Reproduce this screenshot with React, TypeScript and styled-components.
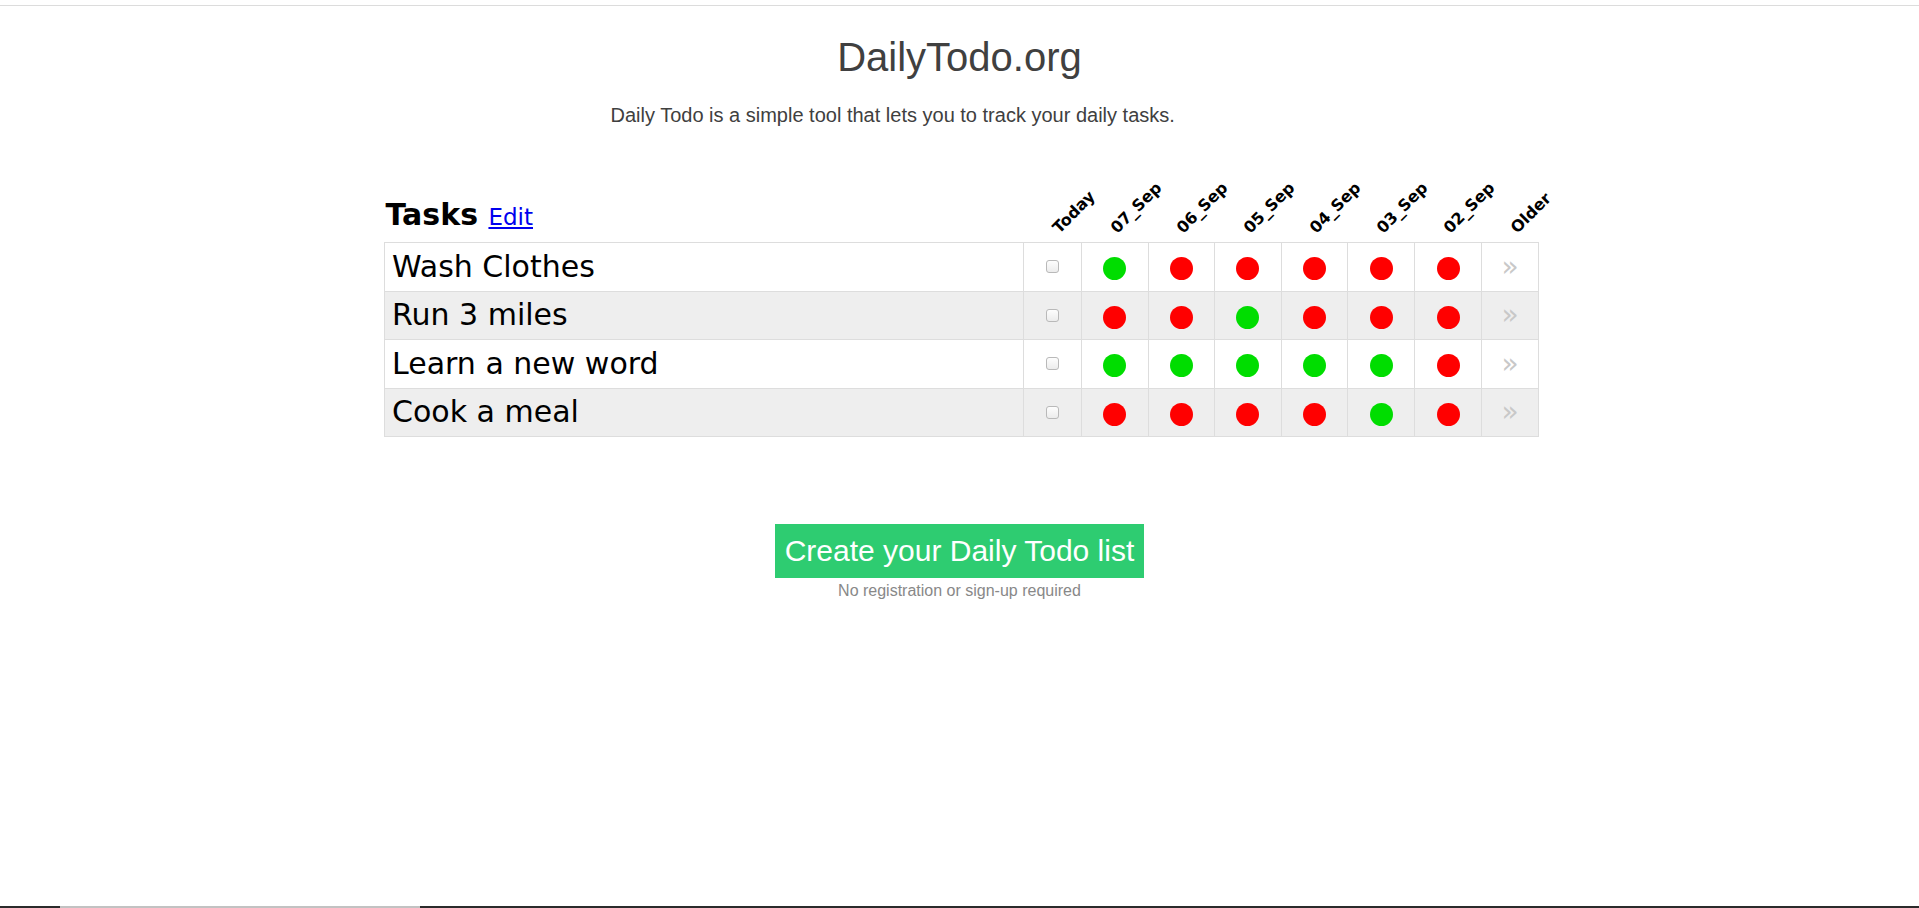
import styled, { createGlobalStyle } from 'styled-components';

const GlobalStyle = createGlobalStyle`
  html, body {
    margin: 0;
    padding: 0;
    background: #fff;
  }
  body {
    font-family: 'Liberation Sans', Arial, sans-serif;
    color: #404040;
  }
`;

const columns = ['Today', '07_Sep', '06_Sep', '05_Sep', '04_Sep', '03_Sep', '02_Sep', 'Older'];
const widths = [58, 66.5, 66.5, 66.5, 66.5, 67, 67, 57];

// g = done, r = missed, newest day first
const tasks: [string, string][] = [
  ['Wash Clothes', 'grrrrr'],
  ['Run 3 miles', 'rrgrrr'],
  ['Learn a new word', 'gggggr'],
  ['Cook a meal', 'rrrrgr'],
];

function App() {
  return (
    <>
      <GlobalStyle />
      <Page>
        <TopBar />
        <Main>
          <Title>DailyTodo.org</Title>
          <Intro>Daily Todo is a simple tool that lets you to track your daily tasks.</Intro>
          <Table>
            <thead>
              <tr>
                <TasksHead>
                  Tasks <EditLink href="#">Edit</EditLink>
                </TasksHead>
                {columns.map((c, i) => (
                  <DayHead key={c} $w={widths[i]}>
                    <Slant>{c}</Slant>
                  </DayHead>
                ))}
              </tr>
            </thead>
            <tbody>
              {tasks.map(([name, marks], r) => (
                <Row key={name} $alt={r % 2 === 1}>
                  <TaskCell>{name}</TaskCell>
                  <MarkCell>
                    <Check type="checkbox" />
                  </MarkCell>
                  {marks.split('').map((m, i) => (
                    <MarkCell key={i}>
                      <Dot $done={m === 'g'} />
                    </MarkCell>
                  ))}
                  <MarkCell>
                    <More>»</More>
                  </MarkCell>
                </Row>
              ))}
            </tbody>
          </Table>
          <Cta>
            <CreateButton>Create your Daily Todo list</CreateButton>
            <Note>No registration or sign-up required</Note>
          </Cta>
        </Main>
        <BottomStrip>
          <StripThumb />
        </BottomStrip>
      </Page>
    </>
  );
}

const Page = styled.div`
  min-height: 100vh;
  display: flex;
  flex-direction: column;
`;

const TopBar = styled.div`
  height: 5px;
  border-bottom: 1px solid #dcdcdc;
`;

const Main = styled.main`
  flex: 1;
`;

const Title = styled.h1`
  margin: 28px 0 0;
  font-size: 40px;
  font-weight: normal;
  line-height: 46px;
  text-align: center;
  color: #404040;
`;

const Intro = styled.p`
  width: 1154px;
  box-sizing: border-box;
  margin: 24px auto 0;
  padding-left: 228px;
  font-size: 20px;
  line-height: 23px;
  color: #404040;
`;

const Table = styled.table`
  width: 1155px;
  margin: 72px 0 0 calc(50% - 575.5px);
  border-collapse: collapse;
  table-layout: fixed;
  font-family: 'DejaVu Sans', Verdana, sans-serif;
  color: #000;
`;

const TasksHead = styled.th`
  padding: 0 0 9px 1px;
  text-align: left;
  vertical-align: bottom;
  font-size: 30px;
  font-weight: bold;
  line-height: 32px;
  white-space: nowrap;
`;

const EditLink = styled.a`
  font-size: 23px;
  font-weight: normal;
  color: #0000ee;
  text-decoration: underline;
`;

const DayHead = styled.th<{ $w: number }>`
  width: ${(p) => p.$w}px;
  padding: 0 0 5px;
  vertical-align: bottom;
`;

const Slant = styled.div`
  width: 0;
  margin-left: 38px;
  font-size: 16px;
  font-weight: bold;
  line-height: 18px;
  white-space: nowrap;
  text-align: left;
  transform: rotate(-45deg);
  transform-origin: 0 100%;
`;

const Row = styled.tr<{ $alt: boolean }>`
  height: 48.5px;
  background: ${(p) => (p.$alt ? '#eeeeee' : '#ffffff')};
`;

const TaskCell = styled.td`
  border: 1px solid #dddddd;
  padding: 0 7px;
  font-size: 30px;
  line-height: 34px;
  white-space: nowrap;
`;

const MarkCell = styled.td`
  border: 1px solid #dddddd;
  padding: 0;
  text-align: center;
  vertical-align: middle;
  font-size: 0;
`;

const Check = styled.input`
  appearance: none;
  width: 13px;
  height: 13px;
  margin: 0;
  border: 1px solid #b9b9b9;
  border-radius: 3px;
  background: linear-gradient(#fdfdfd, #ececec);
  vertical-align: middle;
`;

const Dot = styled.span<{ $done: boolean }>`
  display: inline-block;
  width: 23px;
  height: 23px;
  margin-top: 4px;
  border-radius: 50%;
  background: ${(p) => (p.$done ? '#00dd00' : '#ff0000')};
  vertical-align: middle;
`;

const More = styled.span`
  font-family: 'DejaVu Sans', sans-serif;
  font-size: 28px;
  line-height: 30px;
  color: #c8c8c8;
  vertical-align: middle;
`;

const Cta = styled.div`
  margin-top: 87px;
  text-align: center;
`;

const CreateButton = styled.button`
  display: inline-block;
  padding: 6px 10px;
  border: none;
  border-radius: 0;
  background: #2ecc71;
  color: #ffffff;
  font-family: 'Liberation Sans', Arial, sans-serif;
  font-size: 30px;
  line-height: 42px;
  cursor: pointer;
`;

const Note = styled.div`
  margin-top: 4px;
  font-size: 16px;
  line-height: 18px;
  color: #888888;
`;

const BottomStrip = styled.div`
  height: 2px;
  display: flex;
  background: #2b2b2b;
`;

const StripThumb = styled.div`
  width: 360px;
  margin-left: 60px;
  background: #c2c2c2;
`;

export default App;
